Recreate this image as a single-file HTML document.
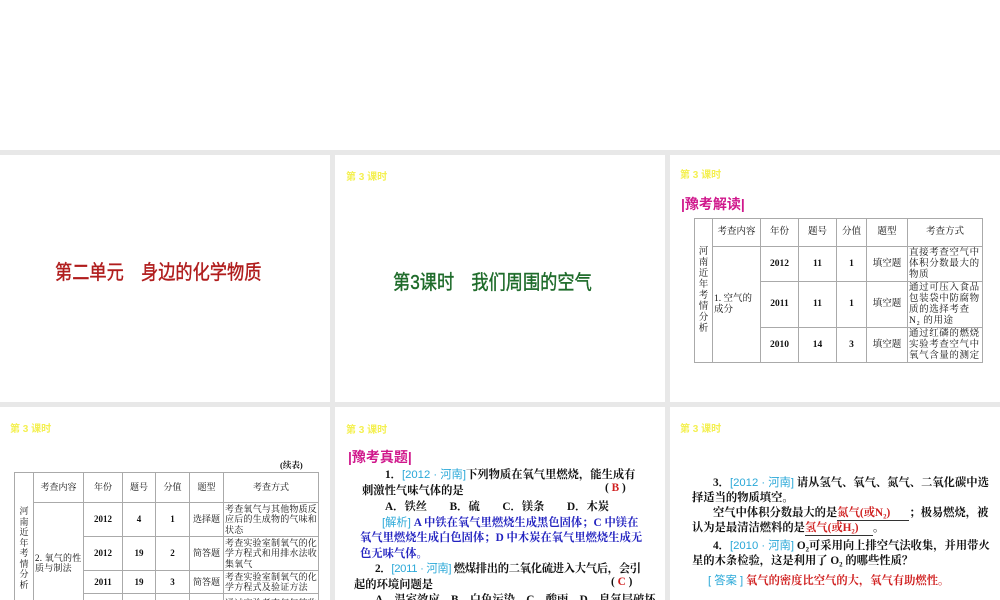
<!DOCTYPE html>
<html><head><meta charset="utf-8"><style>
*{margin:0;padding:0;box-sizing:border-box}
body{width:1000px;height:600px;overflow:hidden;background:#fff;position:relative;font-family:"Liberation Serif","Noto Serif CJK SC","Noto Sans CJK SC",serif;color:#111}
.gray{position:absolute;left:0;top:150px;width:1000px;height:450px;background:#e8e8e8}
.s{position:absolute;background:#fff;overflow:hidden}
.a{position:absolute;white-space:nowrap}
.y{color:#f4f050;font-family:"Liberation Sans","Noto Sans CJK SC",sans-serif;font-size:10px;font-weight:bold}
.mg{color:#d0188c;font-weight:bold;font-size:14px;font-family:"Liberation Sans","Noto Sans CJK SC",sans-serif}
table{position:absolute;border-collapse:collapse;font-size:9.5px;line-height:11px;table-layout:fixed}
td{border:1px solid #aaa;text-align:center;vertical-align:middle;padding:0 1px;overflow:hidden}
td.l{text-align:left;letter-spacing:0.6px}
.t4 td{font-size:9px;line-height:10.5px}
.t4 td.l{letter-spacing:0.2px}
td.nw{white-space:nowrap;letter-spacing:0}
b{font-weight:bold}
.t{font-size:11.3px;font-weight:bold}
.c{color:#2aa8d8;font-weight:normal;font-family:"Liberation Sans","Noto Sans CJK SC",sans-serif}
.bl{color:#2222c0}
.r{color:#d02020}
.title{font-size:20px;font-family:'Liberation Sans','Noto Sans CJK SC',sans-serif;transform:scaleX(0.86);transform-origin:left center;-webkit-text-stroke:0.4px currentColor}
</style></head><body>
<div class="gray"></div>

<div class="s" style="left:0;top:155px;width:330px;height:247px">
 <div class="a title" style="left:55px;top:101px;color:#b01c1c">第二单元　身边的化学物质</div>
</div>
<div class="s" style="left:335px;top:155px;width:330px;height:247px">
 <div class="a y" style="left:11px;top:13px">第 3 课时</div>
 <div class="a title" style="left:58px;top:111px;color:#1e6b2a">第3课时　我们周围的空气</div>
</div>
<div class="s" style="left:670px;top:155px;width:330px;height:247px">
 <div class="a y" style="left:10px;top:11px">第 3 课时</div>
 <div class="a mg" style="left:11px;top:39px">|豫考解读|</div>
 <table style="left:24px;top:63px;width:289px">
  <tr style="height:28px"><td rowspan="4" style="width:18px">河<br>南<br>近<br>年<br>考<br>情<br>分<br>析</td><td style="width:48px">考查内容</td><td style="width:38px">年份</td><td style="width:38px">题号</td><td style="width:30px">分值</td><td style="width:41px">题型</td><td>考查方式</td></tr>
  <tr style="height:35px"><td rowspan="3" class="l nw">1. 空气的<br>成分</td><td><b>2012</b></td><td><b>11</b></td><td><b>1</b></td><td>填空题</td><td class="l">直接考查空气中体积分数最大的物质</td></tr>
  <tr style="height:46px"><td><b>2011</b></td><td><b>11</b></td><td><b>1</b></td><td>填空题</td><td class="l">通过可压入食品包装袋中防腐物质的选择考查 N₂ 的用途</td></tr>
  <tr style="height:35px"><td><b>2010</b></td><td><b>14</b></td><td><b>3</b></td><td>填空题</td><td class="l">通过红磷的燃烧实验考查空气中氧气含量的测定</td></tr>
 </table>
</div>

<div class="s" style="left:0;top:407px;width:330px;height:193px">
 <div class="a y" style="left:10px;top:13px">第 3 课时</div>
 <div class="a" style="left:280px;top:52px;font-size:8.5px;font-weight:bold">(续表)</div>
 <table class="t4" style="left:14px;top:65px;width:305px">
  <tr style="height:30px"><td rowspan="5" style="width:19px">河<br>南<br>近<br>年<br>考<br>情<br>分<br>析</td><td style="width:50px">考查内容</td><td style="width:39px">年份</td><td style="width:33px">题号</td><td style="width:34px">分值</td><td style="width:34px">题型</td><td>考查方式</td></tr>
  <tr style="height:34px"><td rowspan="4" class="l nw">2. 氧气的性<br>质与制法</td><td><b>2012</b></td><td><b>4</b></td><td><b>1</b></td><td>选择题</td><td class="l">考查氧气与其他物质反应后的生成物的气味和状态</td></tr>
  <tr style="height:34px"><td><b>2012</b></td><td><b>19</b></td><td><b>2</b></td><td>简答题</td><td class="l">考查实验室制氧气的化学方程式和用排水法收集氧气</td></tr>
  <tr style="height:23px"><td><b>2011</b></td><td><b>19</b></td><td><b>3</b></td><td>简答题</td><td class="l">考查实验室制氧气的化学方程式及验证方法</td></tr>
  <tr style="height:30px"><td><b>2011</b></td><td><b>21(1)</b></td><td><b>1</b></td><td>综合应</td><td class="l">通过实验考查氧气的收集</td></tr>
 </table>
</div>

<div class="s" style="left:335px;top:407px;width:330px;height:193px">
 <div class="a y" style="left:11px;top:14px">第 3 课时</div>
 <div class="a mg" style="left:13px;top:40px">|豫考真题|</div>
 <div class="a t" style="left:50px;top:59px">1．<span class="c">[2012 · 河南]</span>下列物质在氧气里燃烧，能生成有</div>
 <div class="a t" style="left:27px;top:75px">刺激性气味气体的是</div>
 <div class="a t" style="left:270px;top:75px">( <span class="r">B</span> )</div>
 <div class="a t" style="left:50px;top:91px">A．铁丝　　B．硫　　C．镁条　　D．木炭</div>
 <div class="a t bl" style="left:47px;top:107px"><span class="c">[解析]</span> A 中铁在氧气里燃烧生成黑色固体；C 中镁在</div>
 <div class="a t bl" style="left:25px;top:122px">氧气里燃烧生成白色固体；D 中木炭在氧气里燃烧生成无</div>
 <div class="a t bl" style="left:25px;top:138px">色无味气体。</div>
 <div class="a t" style="left:40px;top:153px;letter-spacing:-0.3px">2．<span class="c">[2011 · 河南]</span> 燃煤排出的二氧化硫进入大气后，会引</div>
 <div class="a t" style="left:19px;top:169px">起的环境问题是</div>
 <div class="a t" style="left:276px;top:169px">( <span class="r">C</span> )</div>
 <div class="a t" style="left:40px;top:184px">A．温室效应　B．白色污染　C．酸雨　D．臭氧层破坏</div>
</div>

<div class="s" style="left:670px;top:407px;width:330px;height:193px">
 <div class="a y" style="left:10px;top:13px">第 3 课时</div>
 <div class="a t" style="left:43px;top:67px">3．<span class="c">[2012 · 河南]</span> 请从氢气、氧气、氮气、二氧化碳中选</div>
 <div class="a t" style="left:22px;top:82px">择适当的物质填空。</div>
 <div class="a t" style="left:43px;top:97px">空气中体积分数最大的是<span class="r" style="border-bottom:1px solid #333;display:inline-block;width:72px">氮气(或N₂)</span>；极易燃烧，被</div>
 <div class="a t" style="left:22px;top:112px">认为是最清洁燃料的是<span class="r" style="border-bottom:1px solid #333;display:inline-block;width:68px">氢气(或H₂)</span>。</div>
 <div class="a t" style="left:43px;top:130px">4．<span class="c">[2010 · 河南]</span> O₂可采用向上排空气法收集，并用带火</div>
 <div class="a t" style="left:22px;top:145px">星的木条检验，这是利用了 O₂ 的哪些性质？</div>
 <div class="a t r" style="left:38px;top:165px"><span class="c">[ 答案 ]</span> 氧气的密度比空气的大，氧气有助燃性。</div>
</div>
</body></html>
